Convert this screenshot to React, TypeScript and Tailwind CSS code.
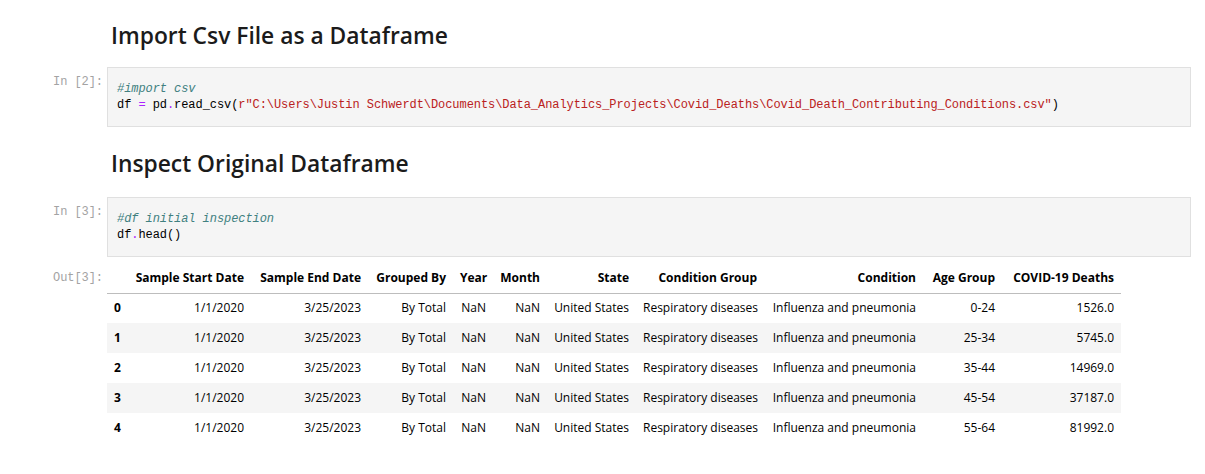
const mono = "font-['Liberation_Mono',monospace] text-[12px] tracking-[-0.066px] leading-[16px]"
const sans = "font-['Open_Sans','Noto_Sans',sans-serif]"

const columns = [
  "",
  "Sample Start Date",
  "Sample End Date",
  "Grouped By",
  "Year",
  "Month",
  "State",
  "Condition Group",
  "Condition",
  "Age Group",
  "COVID-19 Deaths",
]

const colWidths = ["w-[21px]", "w-[123px]", "w-[117px]", "w-[85px]", "w-[40px]", "w-[54px]", "w-[89px]", "w-[128px]", "w-[159px]", "w-[79px]", "w-[119px]"]

const ages = ["0-24", "25-34", "35-44", "45-54", "55-64"]
const deaths = ["1526.0", "5745.0", "14969.0", "37187.0", "81992.0"]

const rows = ages.map((age, i) => [
  String(i),
  "1/1/2020",
  "3/25/2023",
  "By Total",
  "NaN",
  "NaN",
  "United States",
  "Respiratory diseases",
  "Influenza and pneumonia",
  age,
  deaths[i],
])

function Prompt({ label }: { label: string }) {
  return (
    <div className={`w-[107px] shrink-0 pt-[7px] pr-[4px] text-right text-[#a3a3a3] ${mono}`}>
      {label}
    </div>
  )
}

function CodeCell({ label, children }: { label: string; children: React.ReactNode }) {
  return (
    <div className="flex">
      <Prompt label={label} />
      <div className={`w-[1084px] border border-[#e0e0e0] bg-[#f5f5f5] py-[13px] pl-[9px] text-black ${mono}`}>
        {children}
      </div>
    </div>
  )
}

function Heading({ children, className }: { children: React.ReactNode; className: string }) {
  return (
    <h2 className={`pl-[111px] text-[22.8px] leading-[32px] font-semibold text-[#1b1b1b] ${sans} ${className}`}>
      {children}
    </h2>
  )
}

export default function App() {
  return (
    <div className="min-h-[474px] w-[1205px] bg-white pt-[20px]">
      <Heading className="">Import Csv File as a Dataframe</Heading>

      <div className="mt-[15px]">
        <CodeCell label="In [2]:">
          <div className="italic text-[#408080]">#import csv</div>
          <div className="whitespace-pre">
            df <span className="text-[#aa22ff]">=</span> pd<span className="text-[#aa22ff]">.</span>read_csv(
            <span className="text-[#ba2121]">
              r"C:\Users\Justin Schwerdt\Documents\Data_Analytics_Projects\Covid_Deaths\Covid_Death_Contributing_Conditions.csv"
            </span>
            )
          </div>
        </CodeCell>
      </div>

      <Heading className="mt-[21px]">Inspect Original Dataframe</Heading>

      <div className="mt-[17px]">
        <CodeCell label="In [3]:">
          <div className="italic text-[#408080]">#df initial inspection</div>
          <div className="whitespace-pre">
            df<span className="text-[#aa22ff]">.</span>head()
          </div>
        </CodeCell>
      </div>

      <div className="mt-[6px] flex">
        <Prompt label="Out[3]:" />
        <table className={`w-[1014px] table-fixed border-collapse text-[12px] text-black ${sans}`}>
          <colgroup>
            {colWidths.map((w, i) => (
              <col key={i} className={w} />
            ))}
          </colgroup>
          <thead>
            <tr className="border-b border-[#bdbdbd]">
              {columns.map((c, i) => (
                <th key={i} className="h-[30px] px-[7px] text-right font-bold whitespace-nowrap">
                  {c}
                </th>
              ))}
            </tr>
          </thead>
          <tbody>
            {rows.map((r, ri) => (
              <tr key={ri} className={ri % 2 === 1 ? "bg-[#f5f5f5]" : "bg-white"}>
                {r.map((v, ci) =>
                  ci === 0 ? (
                    <th key={ci} className="h-[30px] px-[7px] text-left font-bold">
                      {v}
                    </th>
                  ) : (
                    <td key={ci} className="h-[30px] px-[7px] text-right whitespace-nowrap">
                      {v}
                    </td>
                  ),
                )}
              </tr>
            ))}
          </tbody>
        </table>
      </div>
    </div>
  )
}
